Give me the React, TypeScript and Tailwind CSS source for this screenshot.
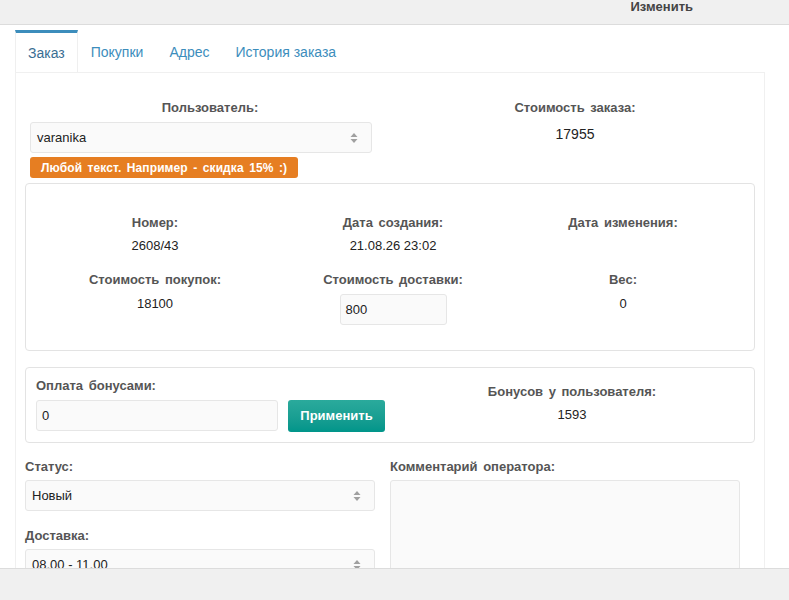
import React from "react"

const Arrows = () => (
    <svg width="8" height="12" viewBox="0 0 8 12" className="shrink-0">
        <path d="M4 1 L7.5 5 H0.5Z M4 11 L7.5 7 H0.5Z" fill="#a0a0a0" />
    </svg>
)

const Select = ({ value, className = "" }: { value: string; className?: string }) => (
    <div className={`h-[31px] bg-[#fafafa] border border-[#e6e6e6] rounded-[3px] flex items-center justify-between pl-[6px] pr-[13px] text-[13px] text-[#222] ${className}`}>
        <span>{value}</span>
        <Arrows />
    </div>
)

const Label = ({ children, className = "" }: { children: React.ReactNode; className?: string }) => (
    <div className={`text-[13px] leading-[18px] font-bold text-[#555] [word-spacing:2px] ${className}`}>{children}</div>
)

const Cell = ({ label, children }: { label: string; children: React.ReactNode }) => (
    <div className="flex flex-col items-center">
        <Label>{label}</Label>
        {children}
    </div>
)

const TABS = ["Заказ", "Покупки", "Адрес", "История заказа"]

export default function App() {
    return (
        <div className="w-[789px] h-[600px] flex flex-col bg-white overflow-hidden font-['Liberation_Sans',Arial,sans-serif]">
            <header className="h-[25px] shrink-0 bg-[#f0f0f0] border-b border-[#dcdcdc] flex justify-end pr-[96px]">
                <span className="text-[13px] leading-[13px] font-bold text-[#444]">Изменить</span>
            </header>

            <main className="flex-1 min-h-0 overflow-hidden pl-[15px] pr-[24px] pt-[5px]">
                <ul className="flex h-[42px]">
                    {TABS.map((t, i) => (
                        <li
                            key={t}
                            className={`flex items-center text-[14px] ${
                                i === 0
                                    ? "px-[12px] bg-white border-t-[3px] border-[#3c8dbc] border-x border-x-[#efefef] text-[#3a6e93] pt-[1px]"
                                    : "px-[13px] text-[#3c8dbc] pt-[3px]"
                            }`}
                        >
                            {t}
                        </li>
                    ))}
                </ul>

                <div className="h-[600px] bg-white border border-[#f0f0f0] px-[9px] pt-[26px]">
                    {/* пользователь / стоимость */}
                    <div className="grid grid-cols-[370px_1fr]">
                        <div className="flex flex-col">
                            <Label className="text-center">Пользователь:</Label>
                            <Select value="varanika" className="mt-[5px] ml-[5px] w-[342px]" />
                            <div className="mt-[4px] ml-[5px] self-start h-[21px] rounded-[3px] bg-[#e67e22] text-white text-[12px] font-bold flex items-center px-[11px] tracking-[0.1px] [word-spacing:2px]">
                                Любой текст. Например - скидка 15% :)
                            </div>
                        </div>
                        <div className="flex flex-col items-center">
                            <Label>Стоимость заказа:</Label>
                            <div className="mt-[8px] text-[14px] leading-[18px] text-[#222]">17955</div>
                        </div>
                    </div>

                    {/* номер, даты */}
                    <div className="mt-[5px] border border-[#e3e3e3] rounded-[4px] pr-[10px] pt-[30px] pb-[25px] grid grid-cols-[258px_218px_242px] gap-y-[16px]">
                        <Cell label="Номер:">
                            <div className="mt-[5px] text-[13px] leading-[18px] text-[#222]">2608/43</div>
                        </Cell>
                        <Cell label="Дата создания:">
                            <div className="mt-[5px] text-[13px] leading-[18px] text-[#222]">21.08.26 23:02</div>
                        </Cell>
                        <Cell label="Дата изменения:">
                            <div className="mt-[5px] h-[18px]" />
                        </Cell>
                        <Cell label="Стоимость покупок:">
                            <div className="mt-[6px] text-[13px] leading-[18px] text-[#222]">18100</div>
                        </Cell>
                        <Cell label="Стоимость доставки:">
                            <div className="mt-[5px] w-[107px] h-[31px] bg-[#fafafa] border border-[#e6e6e6] rounded-[3px] flex items-center pl-[5px] text-[13px] text-[#222]">
                                800
                            </div>
                        </Cell>
                        <Cell label="Вес:">
                            <div className="mt-[6px] text-[13px] leading-[18px] text-[#222]">0</div>
                        </Cell>
                    </div>

                    {/* бонусы */}
                    <div className="mt-[16px] border border-[#e3e3e3] rounded-[4px] pl-[10px] pr-[5px] pt-[9px] pb-[10px] flex">
                        <div className="w-[359px] flex flex-col">
                            <Label>Оплата бонусами:</Label>
                            <div className="mt-[5px] flex gap-[10px]">
                                <div className="w-[242px] h-[31px] bg-[#fafafa] border border-[#e6e6e6] rounded-[3px] flex items-center pl-[5px] text-[13px] text-[#222]">
                                    0
                                </div>
                                <button className="w-[97px] h-[32px] rounded-[3px] bg-gradient-to-b from-[#2aaa9c] to-[#00958a] text-white text-[13px] font-bold">
                                    Применить
                                </button>
                            </div>
                        </div>
                        <div className="flex-1 flex flex-col items-center pt-[6px]">
                            <Label>Бонусов у пользователя:</Label>
                            <div className="mt-[5px] text-[13px] leading-[18px] text-[#222]">1593</div>
                        </div>
                    </div>

                    {/* статус, доставка, комментарий */}
                    <div className="mt-[15px] flex gap-[15px]">
                        <div className="w-[350px] flex flex-col">
                            <Label className="text-[#444]">Статус:</Label>
                            <Select value="Новый" className="mt-[4px]" />
                            <Label className="mt-[16px] text-[#444]">Доставка:</Label>
                            <Select value="08.00 - 11.00" className="mt-[4px]" />
                        </div>
                        <div className="w-[350px] flex flex-col">
                            <Label className="text-[#444]">Комментарий оператора:</Label>
                            <div className="mt-[4px] h-[140px] bg-[#fafafa] border border-[#e6e6e6] rounded-[3px]" />
                        </div>
                    </div>
                </div>
            </main>

            <footer className="h-[32px] shrink-0 bg-[#f0f0f0] border-t border-[#dcdcdc]" />
        </div>
    )
}
